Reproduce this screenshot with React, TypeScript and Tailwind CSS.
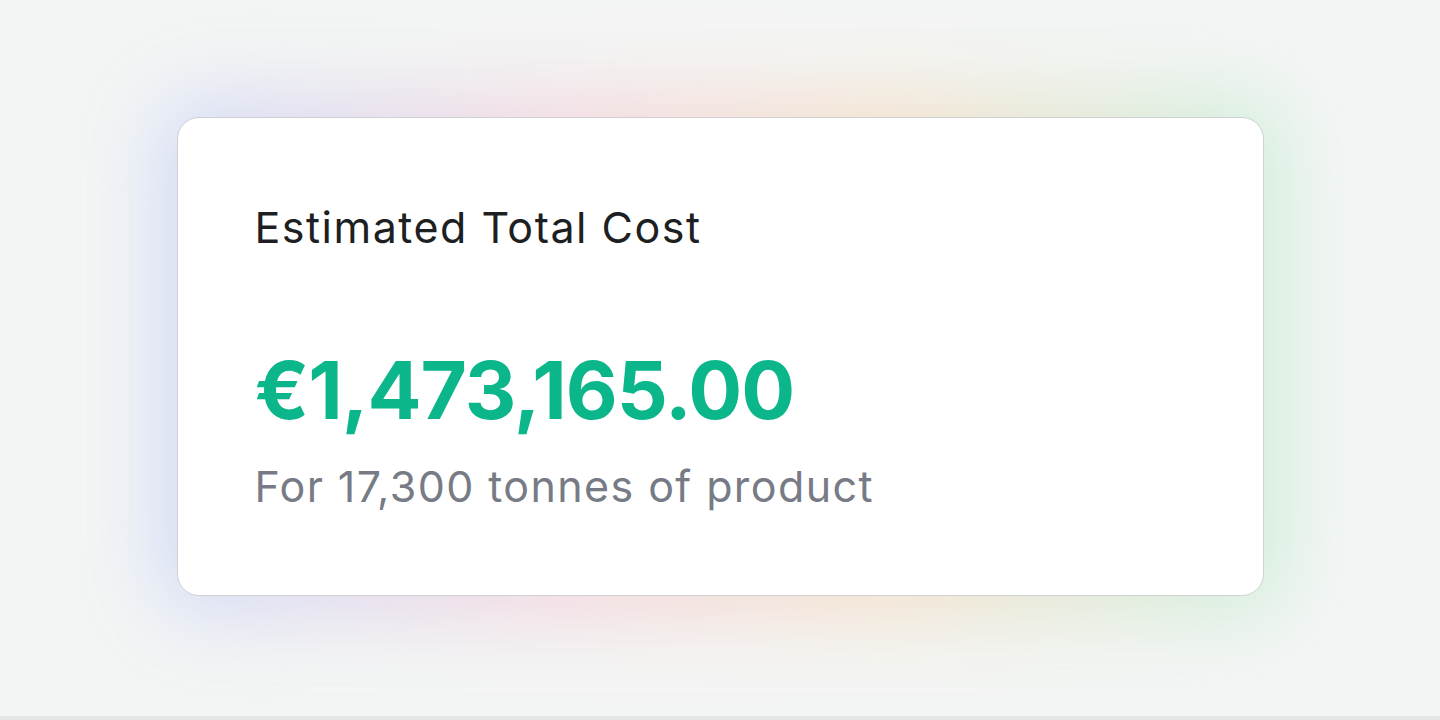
export default function App() {
  return (
    <div className="flex h-[720px] w-full flex-col bg-[#f3f5f4]" style={{ fontFamily: "Inter, 'Noto Sans', sans-serif" }}>
      <div className="flex flex-1 items-center justify-center">
        <div className="relative mb-[3px]">
          {/* soft rainbow glow behind the card */}
          <div className="pointer-events-none absolute -inset-5 rounded-[44px] bg-[linear-gradient(90deg,#c9d6fa_0%,#f4d0dc_35%,#f6dcc0_65%,#c3eed6_100%)] opacity-80 blur-[40px]" />
          <div className="relative w-[1087px] rounded-[22px] border border-[#cfd2d5] bg-white pl-[77px] pt-[85px] pb-[85px]">
            <h2 className="text-[43px] font-normal leading-[48px] tracking-[1.5px] text-[#1d1f23]">Estimated Total Cost</h2>
            <p className="mt-[99px] text-[80px] font-bold leading-[80px] tracking-[-1px] text-[#0bb68a]">€1,473,165.00</p>
            <p className="mt-[32px] text-[43px] font-normal leading-[48px] tracking-[1.4px] text-[#777b85]">For 17,300 tonnes of product</p>
          </div>
        </div>
      </div>
      <div className="h-[4px] bg-[#e4e6e5]" />
    </div>
  );
}
